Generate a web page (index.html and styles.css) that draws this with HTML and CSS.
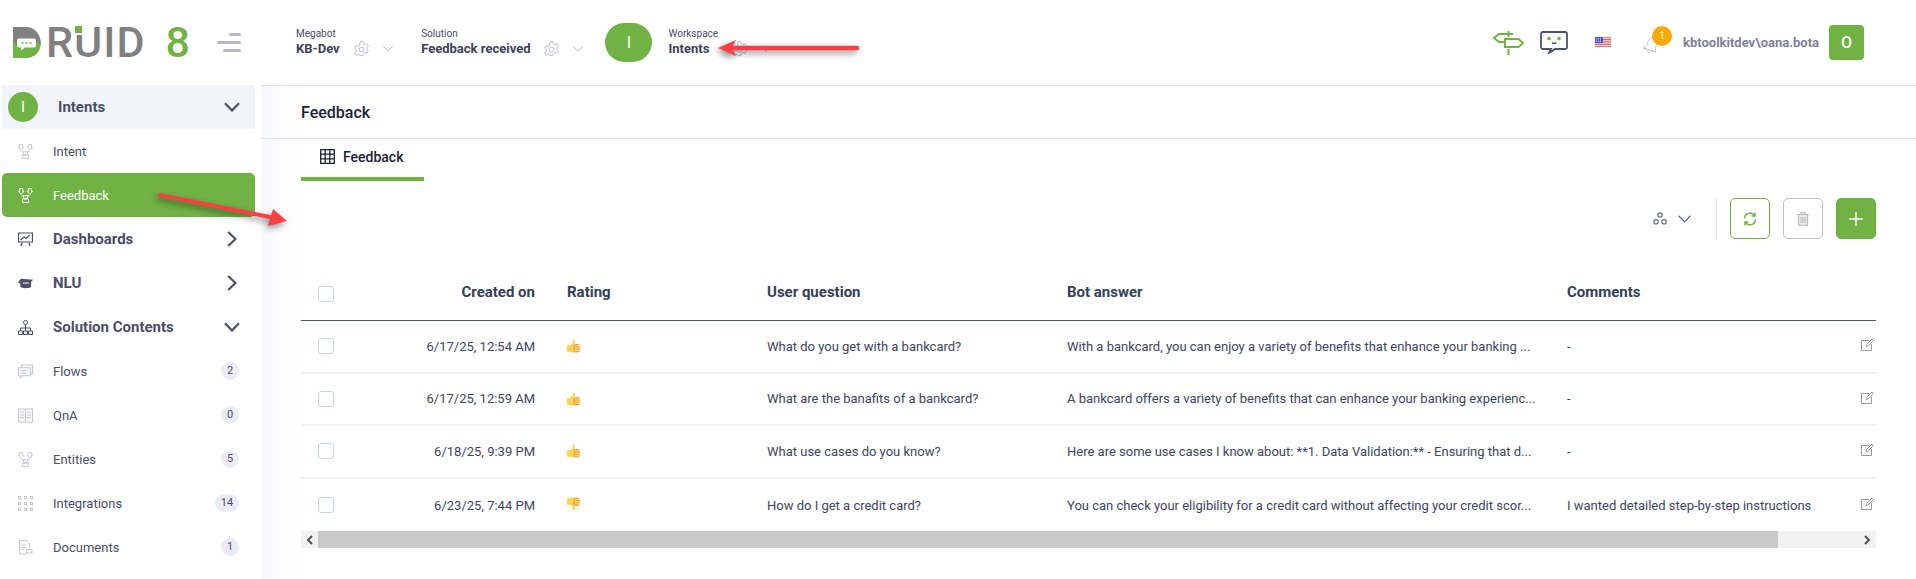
FILE: index.html
```html
<!DOCTYPE html>
<html lang="en">
<head>
<meta charset="utf-8">
<title>Druid - Feedback</title>
<link rel="stylesheet" href="styles.css">
</head>
<body>
<svg class="defs" width="0" height="0" aria-hidden="true">
  <defs>
    <symbol id="gear" viewBox="0 0 16 18">
      <path d="M6.500 1h3l.5 2.300 1.600.9 2.200-.8 1.500 2.600-1.700 1.600v1.800l1.700 1.600-1.500 2.600-2.200-.8-1.600.9-.5 2.300h-3L6 15.700l-1.600-.9-2.200.8L.7 13l1.700-1.600V9.600L.7 8l1.500-2.600 2.200.8L6 5.300z" transform="translate(0 -.5)" fill="none" stroke="currentColor" stroke-width="1"/>
      <circle cx="8" cy="9" r="2.600" fill="none" stroke="currentColor" stroke-width="1"/>
    </symbol>
    <symbol id="chev-thin" viewBox="0 0 10 6"><path d="M.5.500 5 5.200 9.500.5" fill="none" stroke="currentColor" stroke-width="1"/></symbol>
    <symbol id="chev-down" viewBox="0 0 16 10"><path d="M1 1.200 8 8.500l7-7.300" fill="none" stroke="currentColor" stroke-width="2.200"/></symbol>
    <symbol id="chev-right" viewBox="0 0 10 16"><path d="M1.200 1 8.500 8l-7.300 7" fill="none" stroke="currentColor" stroke-width="2.200"/></symbol>
    <symbol id="intent" viewBox="0 0 14 14.500" fill="none" stroke="currentColor" stroke-width=".9">
      <path d="M1.300.5h3v2.800h1.200L2.800 6 .1 3.300h1.200zM9.700.5h3v2.800h1.200L11.200 6 8.500 3.300h1.200z"/>
      <path d="M3 7.500h8M5 7.500v3h4v-3"/><path d="M4.200 10.500h5.600V14H4.200z"/>
    </symbol>
    <symbol id="flows" viewBox="0 0 14 14" fill="none" stroke="currentColor" stroke-width="1">
      <path d="M3.500 3V1h10v8h-1.500"/><path d="M.5 3.500h11V11h-8l-1.500 2v-2H.5z"/><path d="M2.500 6h7M2.500 8.500h5"/>
    </symbol>
    <symbol id="book" viewBox="0 0 14 14" fill="none" stroke="currentColor" stroke-width="1">
      <path d="M.5 1h6.500v12H.5zM7 1h6.500v12H7z"/><path d="M2 4h3.500M2 6.500h3.500M2 9h3.500M8.500 4H12M8.500 6.500H12M8.500 9H12"/>
    </symbol>
    <symbol id="grid9" viewBox="0 0 14 14" fill="none" stroke="currentColor" stroke-width="1">
      <path d="M.5.500h2v2h-2zM6 .500h2v2H6zM11.500.500h2v2h-2zM.5 6h2v2h-2zM6 6h2v2H6zM11.500 6h2v2h-2zM.5 11.500h2v2h-2zM6 11.500h2v2H6zM11.500 11.500h2v2h-2z"/>
    </symbol>
    <symbol id="doc" viewBox="0 0 14 15" fill="none" stroke="currentColor" stroke-width="1">
      <path d="M8 14H1V.5h7l3 3.500v4"/><path d="M3 5h5M3 7.500h5M3 10h3"/><path d="M8 9.500h5.500v3.500H8z"/>
    </symbol>
    <symbol id="thumb" viewBox="0 0 13 14">
      <path d="M3.500 6.500 6 3V.6c1.300-.4 2 .5 2 1.600L7.500 5H7v8.500H3.500z" fill="#fdd34f"/>
      <path d="M0 6.200h4V13H1.500A1.500 1.500 0 0 1 0 11.500z" fill="#fdd34f"/>
      <rect x="6.500" y="5" width="6.200" height="8.500" rx="2" fill="#f5a63d"/>
      <path d="M8 7h4M8 9.200h4M8 11.400h4" stroke="#fde38a" stroke-width="1"/>
    </symbol>
    <symbol id="edit" viewBox="0 0 13 13" fill="none" stroke="#9a9a9a" stroke-width="1">
      <path d="M8 2.500H.5v10h10V6"/><path d="M5 8.500l.5-2L11 1l1.500 1.500L7 8z"/>
    </symbol>
  </defs>
</svg>

<header class="topbar">
  <div class="brand">
    <div class="logo">
      <svg class="logo-d" viewBox="0 0 28 31" width="28" height="31" aria-hidden="true">
        <path d="M0 0h13c8 0 14 6 15 16H0z" fill="#808080"/>
        <path d="M0 16h28c-.5 9-7 15-15 15H0z" fill="#70b244"/>
        <path d="M6 11.500h15a2 2 0 0 1 2 2v5a2 2 0 0 1-2 2H12l-4 3v-3H6a2 2 0 0 1-2-2v-5a2 2 0 0 1 2-2z" fill="#fff"/>
        <circle cx="9.500" cy="16" r="1" fill="#70b244"/><circle cx="13.500" cy="16" r="1" fill="#70b244"/><circle cx="17.500" cy="16" r="1" fill="#70b244"/>
      </svg>
      <span class="logo-text">RUID</span><span class="logo-dot"></span>
      <span class="logo-num">8</span>
    </div>
    <div class="burger"><i class="b1"></i><i class="b2"></i><i class="b3"></i></div>
  </div>

  <div class="sel sel-bot">
    <div class="sel-text"><small>Megabot</small><b>KB-Dev</b></div>
    <svg class="gear"><use href="#gear"/></svg>
    <svg class="chev"><use href="#chev-thin"/></svg>
  </div>
  <div class="sel sel-sol">
    <div class="sel-text"><small>Solution</small><b>Feedback received</b></div>
    <svg class="gear"><use href="#gear"/></svg>
    <svg class="chev"><use href="#chev-thin"/></svg>
  </div>
  <div class="ws-pill">I</div>
  <div class="sel sel-ws">
    <div class="sel-text"><small>Workspace</small><b>Intents</b></div>
    <svg class="gear"><use href="#gear"/></svg>
    <svg class="chev"><use href="#chev-thin"/></svg>
  </div>

  <div class="tools">
    <svg class="t-sign" viewBox="0 0 31 24" width="31" height="24" fill="none" stroke="#70b244" stroke-width="2" aria-hidden="true">
      <path d="M15.500 0v6M15.500 18v6"/><path d="M20 3H6L1 7l5 4h6"/><path d="M12 8h13.500l4.500 4-4.500 4H12z"/>
    </svg>
    <svg class="t-chat" viewBox="0 0 28 23" width="28" height="23" aria-hidden="true">
      <path d="M3 1h22a2 2 0 0 1 2 2v13a2 2 0 0 1-2 2H15l-6 4 2-4H3a2 2 0 0 1-2-2V3a2 2 0 0 1 2-2z" fill="none" stroke="#4a5472" stroke-width="1.800"/>
      <circle cx="9" cy="7.500" r="1.800" fill="#70b244"/><circle cx="19" cy="7.500" r="1.800" fill="#70b244"/>
      <path d="M12 11.500c1 1.200 3 1.200 4 0" fill="none" stroke="#4a5472" stroke-width="1.500"/>
    </svg>
    <svg class="t-flag" viewBox="0 0 16 11" width="16" height="11" aria-hidden="true">
      <rect width="16" height="11" fill="#f3f3f6"/>
      <path d="M0 .8h16M0 2.500h16M0 4.200h16M0 5.900h16M0 7.600h16M0 9.300h16" stroke="#d9534f" stroke-width=".9"/>
      <rect width="8" height="6" fill="#4a55c8"/>
      <path d="M1 1.500h6M1 3h6M1 4.500h6" stroke="#e4e6fb" stroke-width=".8" stroke-dasharray="1 1"/>
    </svg>
    <div class="bell">
      <svg viewBox="0 0 18 18" width="18" height="18" fill="none" stroke="#c4c4d0" stroke-width="1" aria-hidden="true">
        <path d="M1 12c3-1 4-3 5-6s3-5 6-3 3 5 2 7-1 3 0 6z"/><path d="M1 12l13 4"/><path d="M5 14.500c0 2 3 3 4 1"/>
      </svg>
      <span class="bell-badge">1</span>
    </div>
    <span class="user">kbtoolkitdev\oana.bota</span>
    <span class="avatar">O</span>
  </div>
</header>

<div class="body">
  <nav class="side">
    <div class="row ws-row">
      <span class="ws-dot">I</span><span class="ws-name">Intents</span>
      <svg class="c-down"><use href="#chev-down"/></svg>
    </div>
    <a class="row item"><svg class="ic"><use href="#intent"/></svg><span>Intent</span></a>
    <a class="row item active"><svg class="ic"><use href="#intent"/></svg><span>Feedback</span></a>
    <div class="row group">
      <svg class="ic" viewBox="0 0 15 14" fill="none" stroke="currentColor" stroke-width="1.200"><path d="M.5.500h14v9H.5z"/><path d="M2.500 7.500 6 4.500l2 1.500 4-3.500"/><path d="M4 10l-1 3.500M11 10l1 3.500"/></svg>
      <span>Dashboards</span><svg class="c-right"><use href="#chev-right"/></svg>
    </div>
    <div class="row group">
      <svg class="ic" viewBox="0 0 16 10"><path d="M3 0 16 1l-2 2.500V8c0 1.500-3 2-6 2s-5-.5-5.500-1.500V5L0 3.800z" fill="currentColor"/><path d="M5 4.500h7" stroke="#fff" stroke-width="1"/></svg>
      <span>NLU</span><svg class="c-right"><use href="#chev-right"/></svg>
    </div>
    <div class="row group">
      <svg class="ic" viewBox="0 0 15 15" fill="none" stroke="currentColor" stroke-width="1"><circle cx="7.500" cy="2.500" r="2"/><path d="M7.500 4.500v3.500M2.500 11V8h10v3M7.500 8v3"/><path d="M.5 11h4v3.500h-4zM5.500 11h4v3.500h-4zM10.500 11h4v3.500h-4z"/></svg>
      <span>Solution Contents</span><svg class="c-down"><use href="#chev-down"/></svg>
    </div>
    <a class="row item"><svg class="ic"><use href="#flows"/></svg><span>Flows</span><em class="count">2</em></a>
    <a class="row item"><svg class="ic"><use href="#book"/></svg><span>QnA</span><em class="count">0</em></a>
    <a class="row item"><svg class="ic"><use href="#intent"/></svg><span>Entities</span><em class="count">5</em></a>
    <a class="row item"><svg class="ic"><use href="#grid9"/></svg><span>Integrations</span><em class="count wide">14</em></a>
    <a class="row item"><svg class="ic"><use href="#doc"/></svg><span>Documents</span><em class="count">1</em></a>
  </nav>

  <main class="main">
    <div class="title">Feedback</div>
    <div class="tabs">
      <div class="tab">
        <svg viewBox="0 0 15 15" width="15" height="15" fill="none" stroke="#1a2238" stroke-width="1.300" aria-hidden="true"><path d="M.7.700h13.600v13.600H.7zM5.200.700v13.600M9.800.700v13.600M.7 5.200h13.600M.7 9.800h13.600"/></svg>
        <span>Feedback</span>
      </div>
    </div>
    <div class="toolbar">
      <svg class="tree" viewBox="0 0 14 13" width="14" height="13" fill="none" stroke="#5d6a86" stroke-width="1.200" aria-hidden="true"><circle cx="7" cy="3" r="2.200"/><circle cx="3" cy="9.800" r="2.200"/><circle cx="11" cy="9.800" r="2.200"/></svg>
      <svg class="tree-chev"><use href="#chev-thin"/></svg>
      <span class="divider"></span>
      <button class="btn btn-refresh" aria-label="Refresh">
        <svg viewBox="0 0 14 14" width="14" height="14" fill="none" stroke="#70b244" stroke-width="1.500"><path d="M1.500 6.500A5.500 5.500 0 0 1 11.500 3.500"/><path d="M12 .5v3.500H8.500"/><path d="M12.500 7.500A5.500 5.500 0 0 1 2.500 10.500"/><path d="M2 13.500V10h3.500"/></svg>
      </button>
      <button class="btn btn-del" aria-label="Delete">
        <svg viewBox="0 0 12 14" width="12" height="14" fill="none" stroke="#bdbdbd" stroke-width="1.200"><path d="M0 2.500h12M4 2.500V.7h4v1.800"/><path d="M1.500 2.500h9V13.400h-9z" fill="#ececec"/><path d="M4 5v6M6 5v6M8 5v6"/></svg>
      </button>
      <button class="btn btn-add" aria-label="Add">
        <svg viewBox="0 0 14 14" width="14" height="14" stroke="#fff" stroke-width="1.400"><path d="M7 0v14M0 7h14"/></svg>
      </button>
    </div>

    <div class="tbl">
      <div class="tr thead">
        <span class="cb"></span><span class="date">Created on</span><span>Rating</span><span>User question</span><span>Bot answer</span><span>Comments</span><span></span>
      </div>
      <div class="tr">
        <span class="cb"></span><span class="date">6/17/25, 12:54 AM</span><svg class="thumb"><use href="#thumb"/></svg><span>What do you get with a bankcard?</span><span>With a bankcard, you can enjoy a variety of benefits that enhance your banking ...</span><span>-</span><svg class="pen"><use href="#edit"/></svg>
      </div>
      <div class="tr">
        <span class="cb"></span><span class="date">6/17/25, 12:59 AM</span><svg class="thumb"><use href="#thumb"/></svg><span>What are the banafits of a bankcard?</span><span>A bankcard offers a variety of benefits that can enhance your banking experienc...</span><span>-</span><svg class="pen"><use href="#edit"/></svg>
      </div>
      <div class="tr">
        <span class="cb"></span><span class="date">6/18/25, 9:39 PM</span><svg class="thumb"><use href="#thumb"/></svg><span>What use cases do you know?</span><span>Here are some use cases I know about: **1. Data Validation:** - Ensuring that d...</span><span>-</span><svg class="pen"><use href="#edit"/></svg>
      </div>
      <div class="tr last">
        <span class="cb"></span><span class="date">6/23/25, 7:44 PM</span><svg class="thumb down"><use href="#thumb"/></svg><span>How do I get a credit card?</span><span>You can check your eligibility for a credit card without affecting your credit scor...</span><span>I wanted detailed step-by-step instructions</span><svg class="pen"><use href="#edit"/></svg>
      </div>
      <div class="hscroll">
        <span class="hs-btn"><svg viewBox="0 0 7 10" width="7" height="10" fill="none" stroke="#505050" stroke-width="2"><path d="M6 1 2 5l4 4"/></svg></span>
        <span class="hs-thumb"></span>
        <span class="hs-btn end"><svg viewBox="0 0 7 10" width="7" height="10" fill="none" stroke="#505050" stroke-width="2"><path d="m1 1 4 4-4 4"/></svg></span>
      </div>
    </div>
  </main>
</div>

<svg class="arrow arrow-side" viewBox="0 0 140 40" width="140" height="40" aria-hidden="true">
  <path d="M3 4 118 27" stroke="#fb3f45" stroke-width="4" stroke-linecap="round"/>
  <path d="M130 30 111 35 116 18z" fill="#fb3f45"/>
</svg>
<svg class="arrow arrow-ws" viewBox="0 0 145 24" width="145" height="24" aria-hidden="true">
  <path d="M142 11H18" stroke="#fb3f45" stroke-width="4.500" stroke-linecap="round"/>
  <path d="M3 11 21 3 17 11 21 19z" fill="#fb3f45"/>
</svg>
</body>
</html>
```

FILE: styles.css
```css
* { box-sizing: border-box; }
html, body { margin: 0; height: 100%; }
body {
  position: relative;
  width: 1916px;
  height: 579px;
  overflow: hidden;
  background: #fff;
  font-family: Roboto, "Liberation Sans", sans-serif;
  color: #3c4660;
}
.defs { position: absolute; }

/* top bar */
.topbar {
  height: 85px;
  display: flex;
  align-items: center;
}
.brand { width: 296px; display: flex; align-items: center; padding-left: 13px; flex: none; }
.logo { position: relative; display: flex; align-items: center; height: 31px; width: 177px; flex: none; }
.logo-d { flex: none; }
.logo-text {
  margin-left: 5px;
  font-size: 43px;
  line-height: 31px;
  font-weight: 500;
  color: #808080;
  letter-spacing: 1px;
}
.logo-dot {
  position: absolute;
  left: 62px;
  top: -1px;
  width: 7px;
  height: 7px;
  background: #70b244;
  box-shadow: 0 1px 0 1px #fff;
}
.logo-num {
  margin-left: 20px;
  font-size: 43px;
  line-height: 31px;
  font-weight: 500;
  color: #70b244;
}
.burger { width: 24px; margin-left: 27px; display: flex; flex-direction: column; align-items: flex-end; gap: 5px; }
.burger i { display: block; height: 3px; border-radius: 2px; background: #b7b7cc; }
.b1 { width: 12px; } .b2 { width: 24px; } .b3 { width: 18px; }

.sel { display: flex; align-items: center; flex: none; }
.sel-text { display: flex; flex-direction: column; }
.sel-text small { font-size: 10px; line-height: 13px; color: #4a4e69; }
.sel-text b { font-size: 13px; line-height: 18px; font-weight: 700; color: #3d4257; }
.gear { width: 15px; height: 17px; margin: 13px 0 0 14px; color: #b4b6c4; }
.chev { width: 10px; height: 6px; margin: 13px 0 0 14px; color: #b4b6c4; }
.sel-bot { margin-right: 28.500px; }
.sel-sol { margin-right: 22px; }
.ws-pill {
  width: 47px; height: 39px; border-radius: 20px;
  background: #70b244; color: #fff;
  display: flex; align-items: center; justify-content: center;
  font-size: 16px; flex: none;
}
.sel-ws { margin-left: 16px; }
.tools { margin-left: auto; padding-right: 52px; display: flex; align-items: center; }
.t-sign { margin-right: 16px; }
.t-chat { margin-right: 27px; }
.t-flag { margin-right: 31px; }
.bell { position: relative; width: 18px; height: 18px; margin-right: 23px; margin-top: 4px; }
.bell svg { display: block; }
.bell-badge {
  position: absolute; left: 10px; top: -9.500px;
  width: 20px; height: 20px; border-radius: 50%;
  background: #ffa800; color: #fff;
  font-size: 11px; line-height: 20px; text-align: center;
}
.user { font-size: 13px; font-weight: 700; color: #7f8199; margin-right: 10px; }
.avatar {
  width: 35px; height: 35px; border-radius: 4px;
  background: #70b244; color: #fff;
  font-size: 16px; font-weight: 500;
  display: flex; align-items: center; justify-content: center;
}

/* layout */
.body { display: flex; height: 494px; }
.side { width: 261px; flex: none; padding: 0 6px 0 2px; }
.main {
  flex: 1;
  min-width: 0;
  padding: 0 40px;
  border-top: 1px solid #e2e2ee;
  background: linear-gradient(90deg, #f8f9fb 0, #fff 40px);
}

/* sidebar */
.row { height: 44px; display: flex; align-items: center; padding-left: 16px; position: relative; }
.ws-row { background: #f1f5f9; padding-left: 6px; }
.ws-dot {
  width: 30px; height: 30px; border-radius: 50%;
  background: #70b244; color: #fff;
  font-size: 15px; display: flex; align-items: center; justify-content: center;
}
.ws-name { margin-left: 20px; font-size: 15px; font-weight: 700; color: #4a4e69; }
.c-down { position: absolute; left: 222px; top: 17px; width: 16px; height: 10px; color: #4a4e69; }
.c-right { position: absolute; left: 225px; top: 14px; width: 10px; height: 16px; color: #4a4e69; }
.ic { width: 15px; height: 15px; margin-right: 20px; flex: none; }
.item { font-size: 13px; color: #4a4e69; }
.item .ic { color: #c4c6d6; }
.active { background: #70b244; border-radius: 5px; color: #fff; }
.active .ic { color: #fff; }
.group { font-size: 15px; font-weight: 700; color: #4a4e69; }
.group .ic { color: #4a4e69; }
.count {
  position: absolute; right: 16px; top: 13px;
  min-width: 18px; height: 18px; border-radius: 9px;
  background: #ecedf4; color: #4a4e69;
  font-style: normal; font-size: 11px; line-height: 18px; text-align: center;
}
.count.wide { min-width: 24px; }

/* page head */
.title { height: 52px; display: flex; align-items: center; font-size: 16px; font-weight: 500; color: #1a2238; }
.tabs { border-top: 1px solid #e2e2ee; height: 43px; margin: 0 -40px; padding: 0 40px; }
.tab {
  width: 123px; height: 42px; padding: 0 0 3px 19px;
  display: flex; align-items: center; gap: 8px;
  border-bottom: 4px solid #70b244;
  font-size: 14px; font-weight: 500; color: #1a2238;
}
.toolbar { height: 41px; margin-top: 17px; display: flex; align-items: center; justify-content: flex-end; }
.tree { margin-right: 11px; }
.tree-chev { width: 13px; height: 8px; margin-right: 25px; color: #5d6a86; }
.divider { width: 1px; height: 41px; background: #dfe1e8; margin-right: 13px; }
.btn {
  width: 40px; height: 41px; margin-left: 13px; padding: 0;
  border-radius: 5px; background: #fff;
  display: flex; align-items: center; justify-content: center;
}
.divider + .btn { margin-left: 0; }
.btn-refresh { border: 1px solid #70b244; }
.btn-del { border: 1px solid #bfc0c4; }
.btn-add { border: 1px solid #70b244; background: #70b244; }

/* table */
.tbl { margin-top: 24px; }
.tr {
  display: grid;
  grid-template-columns: 50px 200px 200px 300px 500px 310px 15px;
  align-items: center;
  height: 52.600px;
  border-bottom: 2px solid #f0f1f3;
  font-size: 13px;
  color: #3c4660;
}
.tr > span { padding: 0 16px; white-space: nowrap; }
.tr > .cb {
  width: 16px; height: 16px; padding: 0; margin-left: 17px;
  border: 1px solid #c9d4e3; border-radius: 3px; background: #fff;
}
.tr > .date { text-align: right; }
.tr.thead {
  height: 58px;
  border-bottom: 1px solid #4a5472;
  font-size: 15px;
  font-weight: 700;
  color: #33405a;
}
.tr.thead > .cb { margin-top: 4px; }
.thumb { width: 13px; height: 14px; margin-left: 16px; }
.thumb.down { transform: rotate(180deg) scaleX(-1); margin-top: -3px; }
.pen { width: 13px; height: 13px; margin: -3px 0 0; justify-self: start; }
.last { border-bottom: 0; }
.hscroll { height: 17px; display: flex; background: #f1f1f1; }
.hs-btn { width: 17px; flex: none; display: flex; align-items: center; justify-content: center; }
.hs-thumb { width: 1460px; background: #c9c9c9; }
.hs-btn.end { margin-left: auto; }

/* annotation arrows over the screenshot */
.arrow { position: absolute; overflow: visible; filter: drop-shadow(-2px 3px 3px rgba(0,0,0,.45)); }
.arrow-side { left: 157px; top: 191px; }
.arrow-ws { left: 715px; top: 37px; }
```
